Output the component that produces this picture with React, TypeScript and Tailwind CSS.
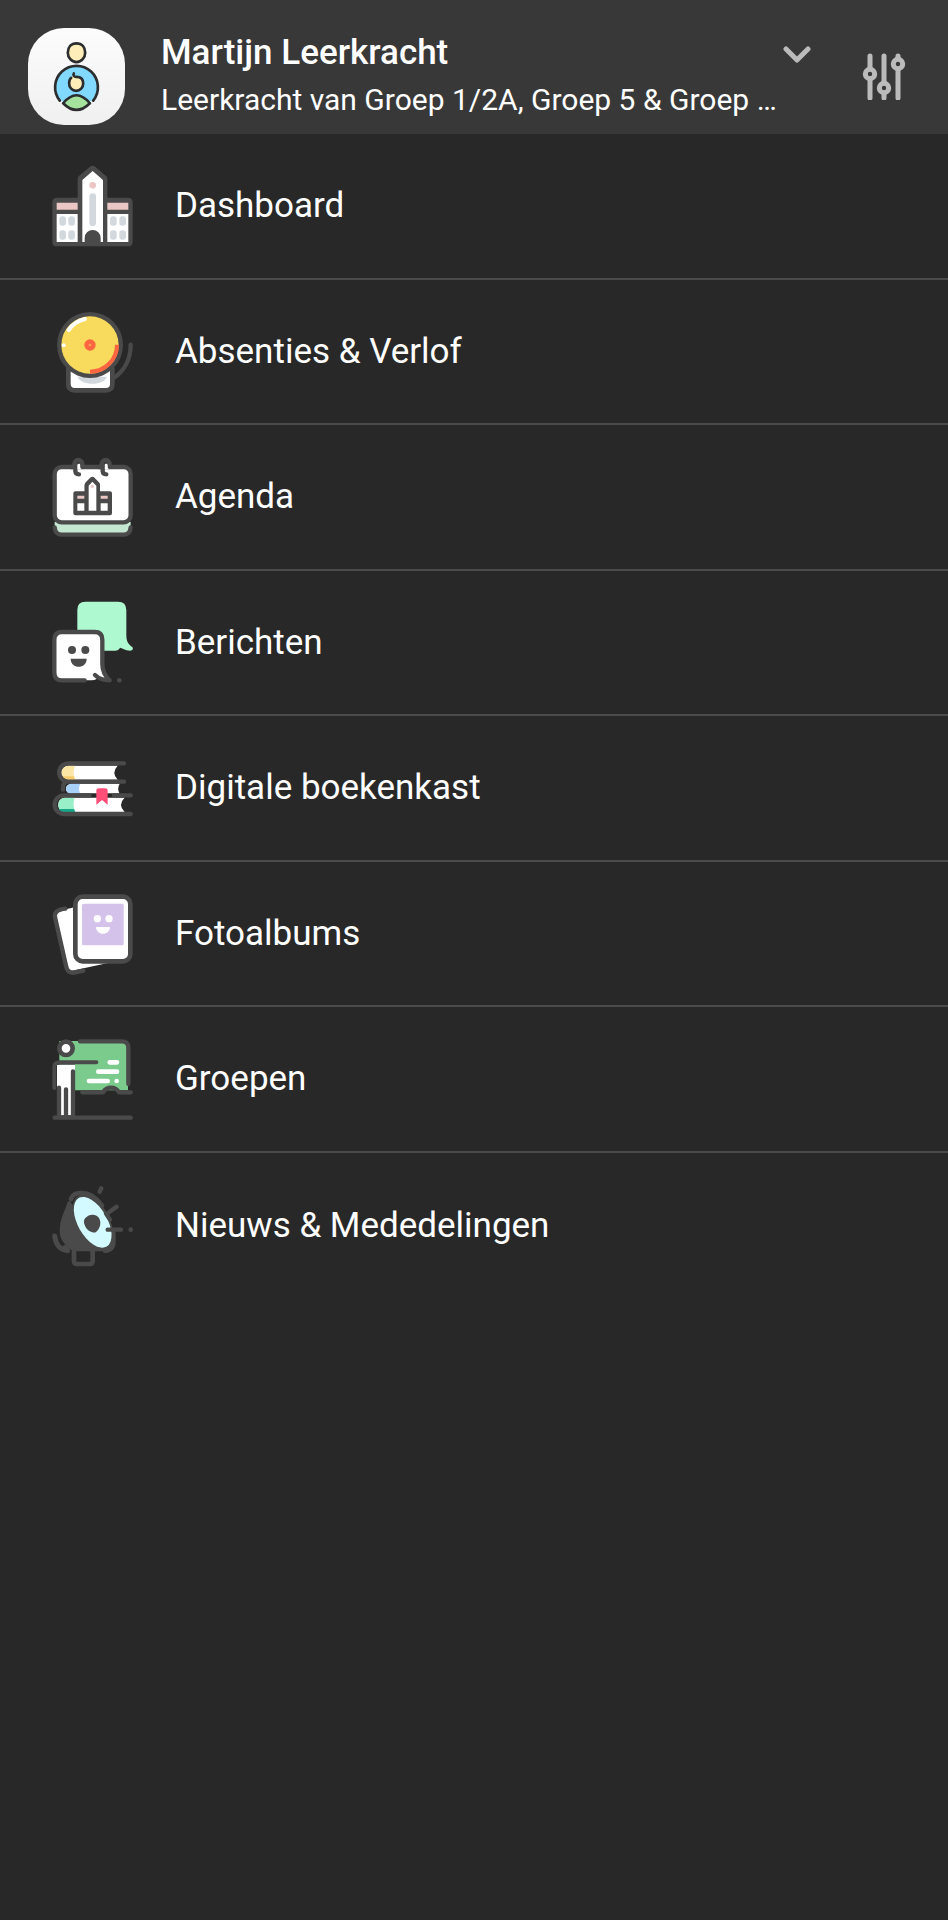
import type { ReactNode } from "react";

const ink = "#4a4a4a";

function Icon({ top, children }: { top: number; children: ReactNode }) {
  return (
    <svg
      viewBox={`35 ${top} 246 246`}
      className="size-[82px] shrink-0 overflow-visible"
      fill="none"
      strokeLinecap="round"
      strokeLinejoin="round"
      aria-hidden="true"
    >
      {children}
    </svg>
  );
}

function SchoolIcon() {
  return (
    <Icon top={31}>
      <path d="M50 129h62V72q0-4 3-7l36-30q6-4 12 0l35 30q3 3 3 7v57h62q14 0 14 14v118q0 14-14 14H50q-14 0-14-14V143q0-14 14-14Z" fill={ink} />
      <path d="M49 144h63v21H49zM201 144h63v21h-63z" fill="#eac6c4" />
      <path d="M49 178h63v84H49zM201 178h63v84h-63z" fill="#fff" />
      <path d="M126 262V76l31-27 31 27v186h-7v-12a24 24 0 0 0-48 0v12Z" fill="#fff" />
      <circle cx="157" cy="92" r="10" fill="#eac6c4" />
      <g fill="#d2d8dd">
        <rect x="147" y="116" width="20" height="98" rx="10" />
        <rect x="57" y="185" width="20" height="28" rx="9" />
        <rect x="84" y="185" width="20" height="28" rx="9" />
        <rect x="57" y="227" width="20" height="28" rx="9" />
        <rect x="84" y="227" width="20" height="28" rx="9" />
        <rect x="209" y="185" width="20" height="28" rx="9" />
        <rect x="237" y="185" width="20" height="28" rx="9" />
        <rect x="209" y="227" width="20" height="28" rx="9" />
        <rect x="237" y="227" width="20" height="28" rx="9" />
      </g>
    </Icon>
  );
}

function BellIcon() {
  return (
    <Icon top={33}>
      <path d="M271 134c0 44-20 79-50 99" stroke={ink} strokeWidth="13" />
      <path d="M84 205h132v47q0 19-19 19h-94q-19 0-19-19Z" fill="#fff" stroke={ink} strokeWidth="14" />
      <path d="M111 230h88c-6 28-78 28-88 0Z" fill="#d2d8dd" />
      <circle cx="149" cy="135" r="99" fill={ink} />
      <circle cx="149" cy="135" r="86" fill="#f8da5c" />
      <path d="M149 215a81 81 0 0 0 81-81" stroke="#ff6540" strokeWidth="12" strokeLinecap="butt" />
      <path d="M85 90a82 82 0 0 1 49-33" stroke="#fff" strokeWidth="12" />
      <circle cx="70" cy="136" r="6" fill="#fff" />
      <circle cx="149" cy="135" r="17" fill="#ff6540" />
      <circle cx="149" cy="135" r="4" fill="#f8a05c" />
    </Icon>
  );
}

function CalendarIcon() {
  return (
    <Icon top={36}>
      <path d="M43 234h228v22q0 17-17 17H60q-17 0-17-17Z" fill="#c5e6d1" />
      <path d="M43 250q2 22 21 22h186q19 0 21-22" stroke={ink} strokeWidth="13" />
      <rect x="43" y="69" width="228" height="166" rx="21" fill="#fff" stroke={ink} strokeWidth="13" />
      <path d="M98 62h26v14H98zM180 62h26v14h-26z" fill="#fff" />
      <path d="M92 69h10V60a12 12 0 0 1 24 0v9M174 69h10V60a12 12 0 0 1 24 0v9" stroke={ink} strokeWidth="13" />
      <path d="M105 62v20q1 9 11 9M187 62v20q1 9 11 9" stroke={ink} strokeWidth="13" />
      <path d="M112 59h7v17h-7zM194 59h7v17h-7z" fill="#fff" />
      <path d="M105 142h28v-20l23-24 23 24v20h30q6 0 6 6v60q0 6-6 6H105q-6 0-6-6v-60q0-6 6-6Z" fill={ink} />
      <path d="M133 142v-20q0-4 4-8l14-14q5-4 10 0l14 14q4 4 4 8v20" fill={ink} />
      <path d="M111 155h21v9h-21zM181 155h21v9h-21z" fill="#eac6c4" />
      <path d="M111 178h21v22h-21zM181 178h21v22h-21zM145 200v-75l11-12 12 12v75Z" fill="#fff" />
      <circle cx="156" cy="127" r="5" fill="#eac6c4" />
    </Icon>
  );
}

function MessagesIcon() {
  return (
    <Icon top={37}>
      <path d="M135 36h98q25 0 25 25v75c0 18 5 28 18 36 4 6 0 11-6 11-16 0-25-9-31-9q-4 9-15 9H111V60q0-24 24-24Z" fill="#aef9d0" />
      <path d="M60 127h108q18 0 18 18v78c0 23 8 36 21 49-14 0-23-3-32-12q-5 12-21 12H60q-18 0-18-18V145q0-18 18-18Z" fill="#fff" />
      <path d="M133 272H65q-23 0-23-23V150q0-23 23-23h98q23 0 23 23v73c0 23 8 36 22 49-19 0-32-4-44-16" stroke={ink} strokeWidth="13" />
      <circle cx="95" cy="181" r="12" fill={ink} />
      <circle cx="135" cy="181" r="12" fill={ink} />
      <path d="M91 207h48c0 32-48 32-48 0Z" fill={ink} />
      <circle cx="237" cy="272" r="7" fill={ink} />
    </Icon>
  );
}

function BooksIcon() {
  return (
    <Icon top={25}>
      <path d="M84 81h148q-20 21 0 42H84a21 21 0 0 1 0-42Z" fill="#fff" />
      <path d="M104 81H84a21 21 0 0 0 0 42h20q-8-21 0-42Z" fill="#fbe6a6" />
      <path d="M67 113q6 10 17 10h20l-3-10Z" fill="#f5cd6c" />
      <path d="M92 135h146q-8 14-1 29H91q-14-2-14-14t15-15Z" fill="#fff" />
      <path d="M120 135H92q-15 3-15 15t14 14h29q-8-15 0-29Z" fill="#a9d2fa" />
      <path d="M71 177h182q-22 21 0 43H71a22 22 0 0 1 0-43Z" fill="#fff" />
      <path d="M103 177H71a22 22 0 0 0 0 43h34q-10-21-2-43Z" fill="#98efc8" />
      <path d="M54 211q6 9 17 9h34l-4-9Z" fill="#16a889" />
      <path d="M251 74H84a27 27 0 0 0 0 55h167M74 130q-7 8-6 23M148 170H71a28 28 0 0 0 0 56h200M221 170h50" stroke={ink} strokeWidth="13" />
      <path d="M168 156q0-7 8-7h18q8 0 8 7v42l-17-14-17 14Z" fill="#ff4f78" />
    </Icon>
  );
}

function PhotosIcon() {
  return (
    <Icon top={38}>
      <path d="M105 80 55 92q-10 3-8 15l32 150q3 14 16 14l132-28Z" fill="#fff" />
      <path d="M75 85q-36 4-31 26l33 145q4 23 24 21l28-6" stroke={ink} strokeWidth="13" />
      <rect x="105" y="49" width="165" height="194" rx="22" fill="#fff" stroke={ink} strokeWidth="14" />
      <rect x="125" y="70" width="125" height="125" rx="5" fill="#d5c2ea" />
      <circle cx="171" cy="115" r="11" fill="#fff" />
      <circle cx="206" cy="115" r="11" fill="#fff" />
      <path d="M167 140h42c0 27-42 27-42 0Z" fill="#fff" />
    </Icon>
  );
}

function GroupsIcon() {
  return (
    <Icon top={41}>
      <path d="M57 50h206v148H104V120H57Z" fill="#7bcb8d" />
      <path d="M50 121h54v152H50Z" fill="#fff" />
      <path d="M119 51h126q19 0 19 19v109" stroke={ink} strokeWidth="13" />
      <path d="M126 204h62q8-14 24-14t24 14h35" stroke={ink} strokeWidth="13" />
      <path d="M42 191v-63q0-14 16-14h110" stroke={ink} strokeWidth="12" />
      <path d="M56 190v84M77 195v79M98 141v133" stroke={ink} strokeWidth="13" />
      <path d="M43 280h228" stroke={ink} strokeWidth="13" />
      <circle cx="77" cy="72" r="20" fill="#fff" stroke={ink} strokeWidth="14" />
      <path d="M208 114h22M174 142h56M146 170h56" stroke="#fff" strokeWidth="14" />
      <circle cx="229" cy="170" r="7" fill="#fff" />
    </Icon>
  );
}

function NewsIcon() {
  return (
    <Icon top={42}>
      <path d="M43 195q5 40 39 44l-8-10" stroke={ink} strokeWidth="15" />
      <path d="M101 240v30q0 9 9 9h38q9 0 9-9v-30" stroke={ink} strokeWidth="14" />
      <path d="M86 94c-6 22-22 48-23 70-2 22-2 36 14 53 10 12 18 20 30 20h88Z" fill={ink} stroke={ink} strokeWidth="8" />
      <ellipse cx="157" cy="154" rx="51" ry="90" transform="rotate(-27 157 154)" fill={ink} />
      <path d="M92 84q8-19 29-18 36-2 64 38M219 187v24q0 27-25 28" stroke={ink} strokeWidth="14" />
      <ellipse cx="157" cy="154" rx="44" ry="84" transform="rotate(-30 157 154)" fill="#d3fbff" />
      <path d="M135 141q10-11 24-10 19 2 21 22 1 18-12 29-4 4-12 2-13-3-20-15-10-18-1-28Z" fill={ink} />
      <path d="m178 62 5-10M206 124l23-17M202 176h40M197 128l12 18" stroke={ink} strokeWidth="13" />
      <circle cx="271" cy="176" r="7" fill={ink} />
    </Icon>
  );
}

function Avatar() {
  return (
    <svg viewBox="39 39 290 290" className="size-full" fill="none" strokeLinecap="round" aria-hidden="true">
      <path d="M184 85c16 0 26 11 26 28 0 14-11 28-26 28s-26-14-26-28c0-17 10-28 26-28Z" fill="#ffedb9" stroke="#2b2d2e" strokeWidth="8" />
      <path d="M134 256a64 64 0 1 1 100 0l-50 10Z" fill="#82d9ff" />
      <path d="M145 263q39-46 78 0-39 42-78 0Z" fill="#a4e29d" />
      <path d="M134 256a64 64 0 1 1 100 0M144 264q40-48 80 0M144 264q40 40 80 0" stroke="#2b2d2e" strokeWidth="8" />
      <path d="M168 188q-6 5-6 17c0 12 9 22 21 22s21-10 21-22-7-20-20-20-8-10-8-10" fill="#ffedb9" stroke="#2b2d2e" strokeWidth="8" />
    </svg>
  );
}

const items = [
  { label: "Dashboard", Glyph: SchoolIcon },
  { label: "Absenties & Verlof", Glyph: BellIcon },
  { label: "Agenda", Glyph: CalendarIcon },
  { label: "Berichten", Glyph: MessagesIcon },
  { label: "Digitale boekenkast", Glyph: BooksIcon },
  { label: "Fotoalbums", Glyph: PhotosIcon },
  { label: "Groepen", Glyph: GroupsIcon },
  { label: "Nieuws & Mededelingen", Glyph: NewsIcon },
];

export default function App() {
  return (
    <div className="min-h-screen bg-[#282828] font-['Roboto',sans-serif] text-white">
      <header className="flex items-start bg-[#383838] pt-7 pr-10 pb-2 pl-7">
        <div className="size-[97px] shrink-0 overflow-hidden rounded-[36px] bg-linear-to-b from-[#fcfcfc] to-[#f0f0f0]">
          <Avatar />
        </div>
        <button type="button" className="ml-9 min-w-0 flex-1 pt-1 text-left">
          <span className="flex items-center justify-between">
            <span className="text-[35px] leading-[42px] font-medium">Martijn Leerkracht</span>
            <svg viewBox="0 0 30 20" className="mr-3 h-5 w-[30px]" fill="none" stroke="#bbb" strokeWidth="5" strokeLinecap="round" strokeLinejoin="round" aria-hidden="true">
              <path d="m4 6 11 11L26 6" />
            </svg>
          </span>
          <span className="mr-9 block truncate text-[30px] leading-[52px]">
            Leerkracht van Groep 1/2A, Groep 5 &amp; Groep 7/8
          </span>
        </button>
        <button type="button" aria-label="Instellingen" className="mt-6 ml-9 shrink-0">
          <svg viewBox="0 0 48 48" className="size-12" fill="none" stroke="#bbb" strokeWidth="5" strokeLinecap="round" aria-hidden="true">
            <path d="M10 4v12M10 27v19M24 4v26M24 41v5M38 4v2M38 17v29" />
            <circle cx="10" cy="22" r="4.7" />
            <circle cx="24" cy="36" r="4.7" />
            <circle cx="38" cy="12" r="4.7" />
          </svg>
        </button>
      </header>
      <nav>
        <ul className="divide-y-2 divide-[#4b4b4b]">
          {items.map(({ label, Glyph }) => (
            <li key={label} className="odd:h-[146px] even:h-[145px]">
              <a href="#" className="flex h-full items-center gap-[41px] pl-[52px]">
                <Glyph />
                <span className="text-[35px] leading-[44px]">{label}</span>
              </a>
            </li>
          ))}
        </ul>
      </nav>
    </div>
  );
}
